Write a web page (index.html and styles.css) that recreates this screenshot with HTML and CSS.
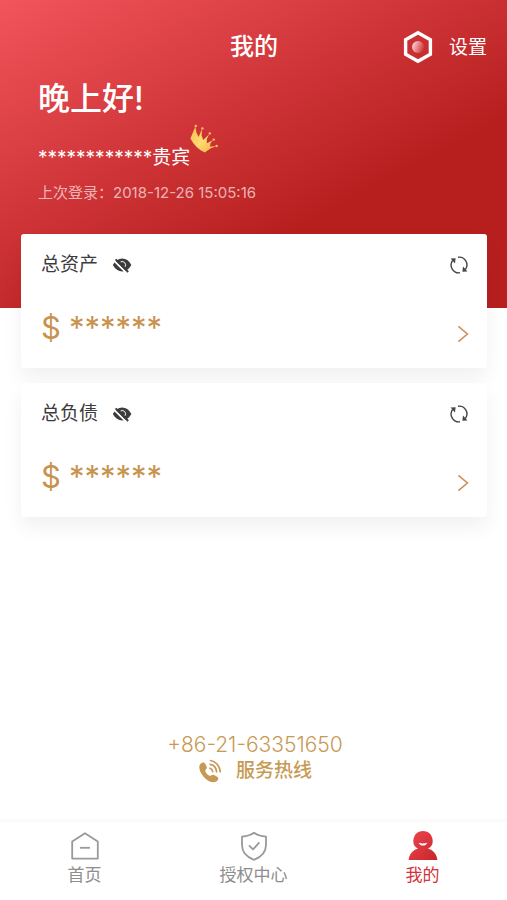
FILE: index.html
```html
<!doctype html>
<html lang="zh-CN">
<head>
  <meta charset="utf-8">
  <meta name="viewport" content="width=device-width, initial-scale=1">
  <title>我的</title>
  <link rel="stylesheet" href="styles.css">
</head>
<body>
<header class="hero">
	<div class="topbar">
		<h1 class="title">我的</h1>
		<a class="settings" href="#settings">
			<svg width="30" height="34" viewBox="0 0 30 34">
				<defs>
					<linearGradient id="dot" x1="0" y1="0.3" x2="1" y2="0.7">
						<stop offset="0.1" stop-color="#f6c4c4"/>
						<stop offset="1" stop-color="#cf3035"/>
					</linearGradient>
				</defs>
				<path d="M15 2.8 27.4 9.8V24.2L15 31.2 2.6 24.2V9.8Z" fill="none" stroke="#fff" stroke-width="3.4"/>
				<circle cx="15" cy="17" r="6" fill="url(#dot)"/>
			</svg>
			<span>设置</span>
		</a>
	</div>
	<p class="greeting">晚上好!</p>
	<p class="guest"><span>************贵宾</span>
		<svg class="crown" width="28" height="30" viewBox="0 0 28 30">
			<defs>
				<linearGradient id="gold" x1="0" y1="0" x2="1" y2="1">
					<stop offset="0" stop-color="#f8b84e"/>
					<stop offset="0.5" stop-color="#ffdc70"/>
					<stop offset="1" stop-color="#f3a945"/>
				</linearGradient>
			</defs>
			<path d="M0.4 14.4 5.4 2.4 6.4 8.6 8.6 13 12 5 11.6 11.4 13.2 16 19.2 10.2 16.8 15 16.8 19.2 23.4 16 20.6 19 20 22.4 26.4 22.2 20.4 24.4 14.8 28.6Q5.6 24.2 0.4 14.4Z" fill="url(#gold)"/>
			<g fill="#f7bd62">
				<circle cx="5.8" cy="2" r="1.2"/>
				<circle cx="12.4" cy="4.4" r="1.2"/>
				<circle cx="19.8" cy="9.4" r="1.2"/>
				<circle cx="23.8" cy="15.6" r="1.2"/>
				<circle cx="26.6" cy="22" r="1.2"/>
			</g>
		</svg>
	</p>
	<p class="last-login">上次登录：2018-12-26 15:05:16</p>
</header>

<main class="cards">
	<section class="card">
		<div class="card-head">
			<h2>总资产</h2>
			<button class="icon-btn" type="button" aria-label="显示总资产">
				<svg width="20" height="16" viewBox="0 0 20 16"><use href="#eye-off"/></svg>
			</button>
			<button class="icon-btn refresh" type="button" aria-label="刷新总资产">
				<svg width="20" height="20" viewBox="0 0 20 20"><use href="#refresh"/></svg>
			</button>
		</div>
		<a class="amount" href="#assets">
			<span class="currency">$</span>
			<span class="mask">******</span>
			<svg class="arrow" width="12" height="18" viewBox="0 0 12 18"><use href="#arrow"/></svg>
		</a>
	</section>

	<section class="card">
		<div class="card-head">
			<h2>总负债</h2>
			<button class="icon-btn" type="button" aria-label="显示总负债">
				<svg width="20" height="16" viewBox="0 0 20 16"><use href="#eye-off"/></svg>
			</button>
			<button class="icon-btn refresh" type="button" aria-label="刷新总负债">
				<svg width="20" height="20" viewBox="0 0 20 20"><use href="#refresh"/></svg>
			</button>
		</div>
		<a class="amount" href="#debts">
			<span class="currency">$</span>
			<span class="mask">******</span>
			<svg class="arrow" width="12" height="18" viewBox="0 0 12 18"><use href="#arrow"/></svg>
		</a>
	</section>
</main>

<a class="hotline" href="tel:+862163351650">
	<span class="phone">+86-21-63351650</span>
	<span class="hotline-label">
		<svg width="24" height="24" viewBox="0 0 24 24">
			<path d="M2 5.4C3.2 3.7 5.4 2.5 7 4.2L8.8 8C9.3 9.6 7.3 10.7 7.2 11.8C7.6 14.2 10 16.4 12 16.8C13.3 16.9 14.2 15.2 15.6 15.8L19.6 18C21.3 19.5 19.5 21.8 17.8 22.8C14.4 24.3 9.4 21.9 6 18.2C2.4 14.4 0 8.8 2 5.4Z" fill="#c79a54"/>
			<g fill="none" stroke="#c79a54" stroke-width="1.7" stroke-linecap="round">
				<path d="M12 9.2A4 4 0 0 1 14.7 12.6"/>
				<path d="M12.2 5.3A8 8 0 0 1 18.5 12.8"/>
				<path d="M12.6 1.5A12 12 0 0 1 22.2 12.8"/>
			</g>
		</svg>
		服务热线
	</span>
</a>

<nav class="tabs">
	<a class="tab" href="#home">
		<svg width="30" height="30" viewBox="0 0 30 30" fill="none" stroke="#9a9a9a" stroke-width="1.8" stroke-linejoin="round">
			<path d="M2.2 10.5 15 2.2 27.8 10.5V27.6H2.2Z"/>
			<path d="M10 16.8H20"/>
		</svg>
		<span>首页</span>
	</a>
	<a class="tab" href="#auth">
		<svg width="30" height="30" viewBox="0 0 30 30" fill="none" stroke="#9a9a9a" stroke-width="1.8" stroke-linejoin="round">
			<path d="M15 1.8C18.5 4.4 22.5 5.2 27 5.6V14C27 21 22.5 26 15 28.8C7.5 26 3 21 3 14V5.6C7.5 5.2 11.5 4.4 15 1.8Z"/>
			<path d="M10 14.4 14 18.4 20.4 11.4"/>
		</svg>
		<span>授权中心</span>
	</a>
	<a class="tab active" href="#mine">
		<svg width="30" height="30" viewBox="0 0 30 30">
			<defs>
				<linearGradient id="user" x1="0" y1="0" x2="1" y2="1">
					<stop offset="0" stop-color="#ed4850"/>
					<stop offset="1" stop-color="#c8242b"/>
				</linearGradient>
			</defs>
			<path d="M15 0A9.6 9.6 0 0 1 20 17.8C25 19 28.6 22.6 29.4 29H0.6C1.4 22.6 5 19 10 17.8A9.6 9.6 0 0 1 15 0Z" fill="url(#user)"/>
			<path d="M10.8 11.8Q15 13 19.2 11.8Q18.4 14.6 15 14.6Q11.6 14.6 10.8 11.8Z" fill="#fff"/>
		</svg>
		<span>我的</span>
	</a>
</nav>

<!-- shared icons -->
<svg class="sprite" width="0" height="0" aria-hidden="true">
	<symbol id="eye-off" viewBox="0 0 20 16">
		<path d="M0.8 8Q4.5 1.6 10.2 1.6Q15.8 1.6 19.4 8Q15.8 14.4 10.2 14.4Q4.5 14.4 0.8 8Z" fill="#3c3c3c"/>
		<path d="M8.6 4.9A3.4 3.4 0 0 1 13 9.8" fill="none" stroke="#fff" stroke-width="1"/>
		<path d="M2.2 3.8 14.4 16" stroke="#fff" stroke-width="1.8"/>
		<path d="M3.6 2.4 16.2 15" stroke="#3c3c3c" stroke-width="1.9"/>
	</symbol>
	<symbol id="refresh" viewBox="0 0 20 20">
		<g fill="none" stroke="#444" stroke-width="1.4">
			<path d="M9 2.2A7.8 7.8 0 0 1 16.4 14.5"/>
			<path d="M11 17.8A7.8 7.8 0 0 1 3.6 5.5"/>
		</g>
		<path d="M1.6 3.6 6.6 3.2 6 8.4Z" fill="#444"/>
		<path d="M18.4 16.4 13.4 16.8 14 11.6Z" fill="#444"/>
	</symbol>
	<symbol id="arrow" viewBox="0 0 12 18">
		<path d="M1.4 1.4 10.4 9 1.4 16.6" fill="none" stroke="#cf8f58" stroke-width="1.6"/>
	</symbol>
</svg>
</body>
</html>
```

FILE: styles.css
```css
*,
*:before,
*:after {
	box-sizing: border-box;
}

body {
	display: flex;
	flex-direction: column;
	min-height: 100vh;
	margin: 0;
	background: #fff;
	color: #3c3c3c;
	font-family: Inter, "Noto Sans CJK SC", sans-serif;
}

h1,
h2,
p {
	margin: 0;
}

a {
	color: inherit;
	text-decoration: none;
}

svg {
	display: block;
	flex: none;
}

.sprite {
	position: absolute;
}

/* Red header */

.hero {
	padding: 28px 20px 104px 38px;
	background: linear-gradient(152deg, #f2555c 0%, #b71f1f 67%);
	color: #fff;
}

.topbar {
	display: grid;
	grid-template-columns: 1fr auto 1fr;
	align-items: center;
	height: 36px;
	margin-left: -17px;
}

.title {
	grid-column: 2;
	font-size: 24px;
	font-weight: 500;
	line-height: 38px;
}

.settings {
	display: flex;
	align-items: center;
	justify-self: end;
	gap: 16px;
	font-size: 19px;
	line-height: 28px;
}

.settings span {
	padding-top: 2px;
}

.greeting {
	margin-top: 11px;
	font-size: 32px;
	font-weight: 500;
	line-height: 48px;
}

.guest {
	display: flex;
	margin-top: 21px;
	font-size: 19px;
	line-height: 28px;
}

.crown {
	margin-top: -20px;
}

.last-login {
	margin-top: 10px;
	font-size: 15px;
	line-height: 22px;
	color: rgba(255,255,255,0.65);
}

/* Balance cards */

.cards {
	display: grid;
	gap: 15px;
	margin-top: -74px;
	padding: 0 20px 0 21px;
}

.card {
	padding: 17px 18px 20px 20px;
	border-radius: 3px;
	background: #fff;
	box-shadow: 0 10px 20px rgba(0,0,0,0.06);
}

.card-head {
	display: flex;
	align-items: center;
	gap: 14px;
	height: 28px;
}

.card-head h2 {
	font-size: 19px;
	font-weight: 400;
	line-height: 28px;
}

.icon-btn {
	padding: 0;
	border: none;
	background: none;
	cursor: pointer;
}

.refresh {
	margin-left: auto;
}

.amount {
	display: flex;
	align-items: center;
	gap: 8px;
	height: 40px;
	margin-top: 29px;
	color: #c8924f;
	font-size: 31px;
	line-height: 40px;
}

.arrow {
	align-self: flex-end;
	margin: 0 0 5px auto;
}

/* Service line */

.hotline {
	display: flex;
	flex-direction: column;
	align-items: center;
	margin: auto 0 38px;
	padding-left: 3px;
	color: #c79a54;
	font-size: 19px;
	line-height: 26px;
}

.phone {
	font-size: 21px;
	font-weight: 300;
}

.hotline-label {
	display: flex;
	align-items: center;
	gap: 14px;
	font-weight: 500;
}

/* Bottom tabs */

.tabs {
	display: grid;
	grid-template-columns: repeat(3, 1fr);
	height: 78px;
	padding-top: 9px;
	box-shadow: 0 -2px 3px rgba(0,0,0,0.03);
}

.tab {
	display: flex;
	flex-direction: column;
	align-items: center;
	gap: 2px;
	color: #8e8e8e;
	font-size: 17px;
	line-height: 24px;
}

.active {
	color: #d2333a;
}
```
